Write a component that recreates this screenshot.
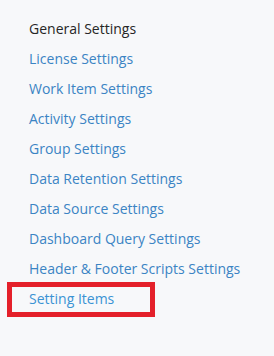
const items = [
  "License Settings",
  "Work Item Settings",
  "Activity Settings",
  "Group Settings",
  "Data Retention Settings",
  "Data Source Settings",
  "Dashboard Query Settings",
  "Header & Footer Scripts Settings",
];

function App() {
  return (
    <div
      className="w-[274px] h-[356px] bg-[#f7f8fa] pt-[14px] pl-[29px]"
      style={{ fontFamily: '"Open Sans", sans-serif' }}
    >
      <ul className="text-[14px] leading-[30px]">
        <li className="text-[#262626]">General Settings</li>
        {items.map((item) => (
          <li key={item} className="text-[#3b84c4]">
            {item}
          </li>
        ))}
        <li className="relative text-[#3a93d4]">
          Setting Items
          <span className="absolute left-[-22px] top-[-2px] w-[148px] h-[35px] border-[5px] border-[#e4202a]" />
        </li>
      </ul>
    </div>
  );
}

export default App;
